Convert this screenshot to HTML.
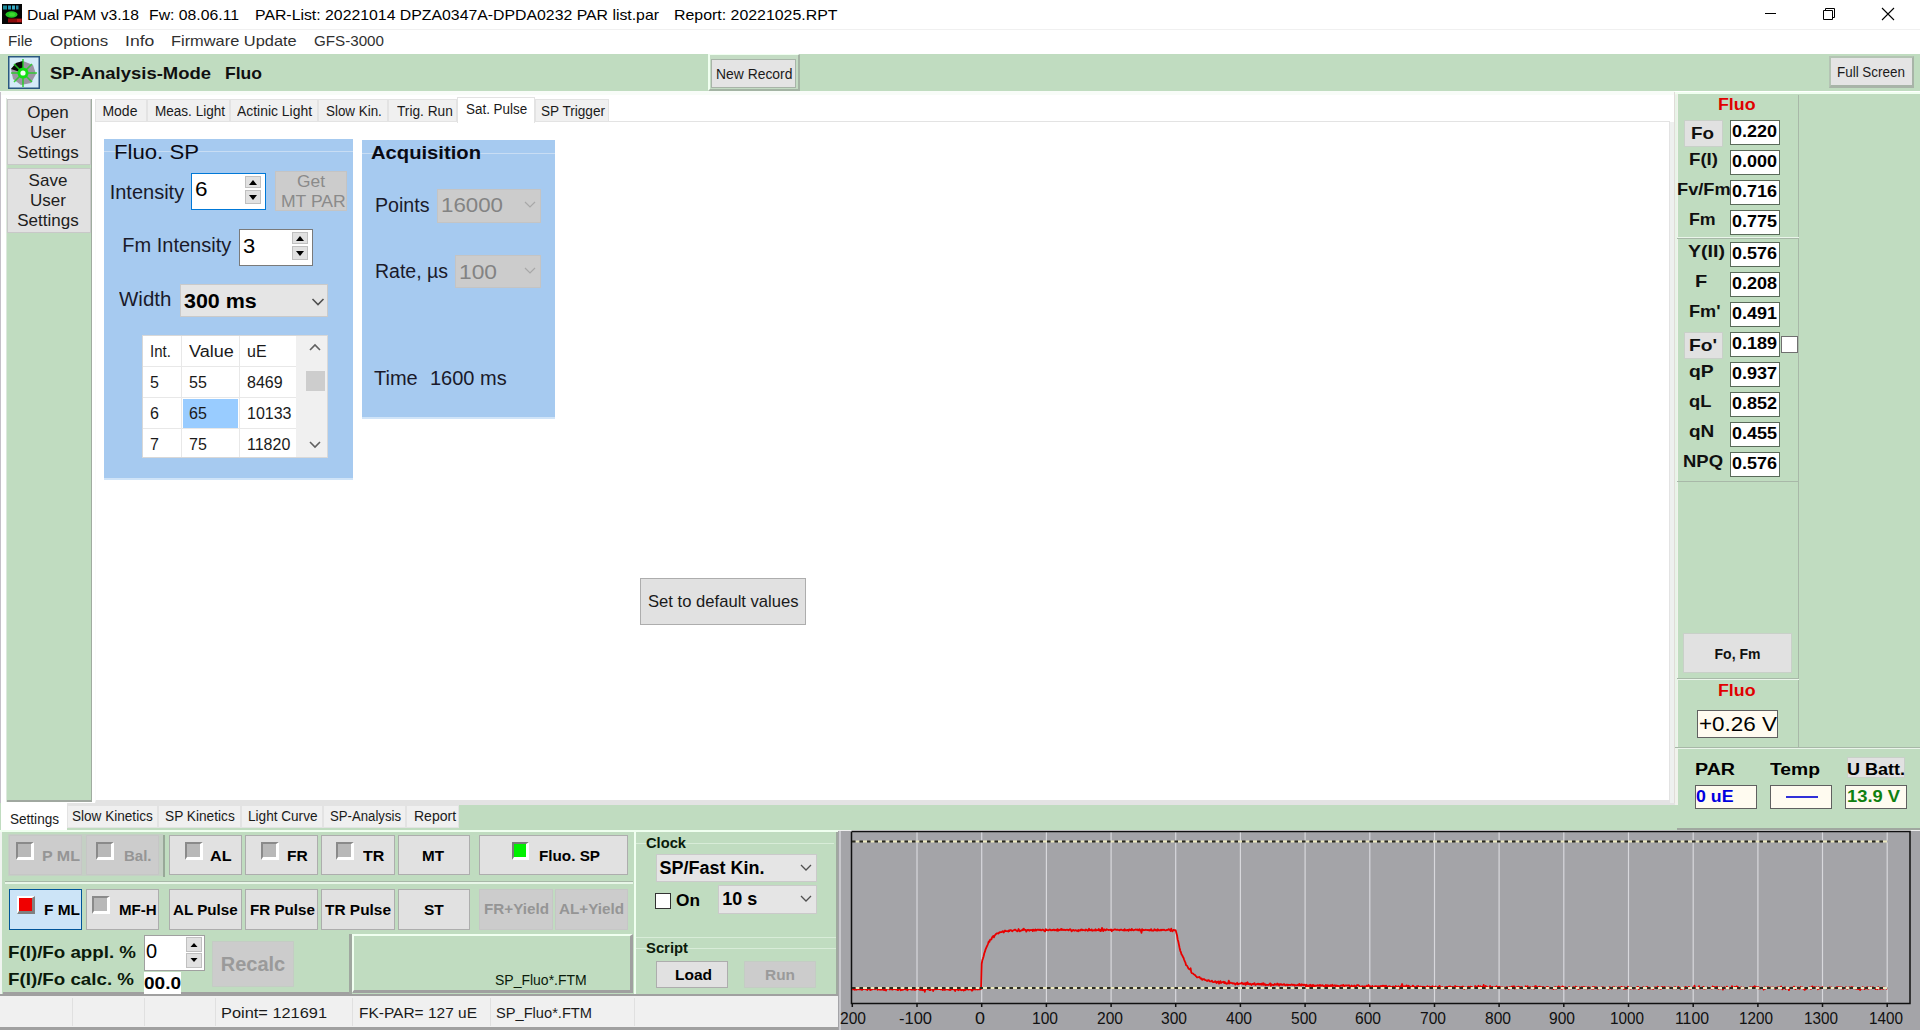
<!DOCTYPE html>
<html><head><meta charset="utf-8"><style>
html,body{margin:0;padding:0;width:1920px;height:1030px;overflow:hidden;background:#fff;}
body>div{position:absolute;}
.t{position:absolute;white-space:nowrap;line-height:0;font-family:"Liberation Sans", sans-serif;transform-origin:0 0;}
</style></head><body>
<div style="left:0px;top:0px;width:1920px;height:1030px;background:#ffffff;"></div>
<svg style="position:absolute;left:2px;top:4px" width="20" height="20" viewBox="0 0 20 20"><rect width="20" height="20" fill="#050505"/><rect x="1" y="1.5" width="4" height="4" fill="#1a8a9a"/><rect x="6" y="1.5" width="3" height="4" fill="#2a9aba"/><rect x="10" y="1.5" width="3" height="4" fill="#3ab0c8"/><rect x="14" y="1.5" width="2.5" height="4" fill="#2a8aa8"/><ellipse cx="9.5" cy="10.5" rx="6" ry="3.2" fill="#22c422"/><ellipse cx="10" cy="10.5" rx="3" ry="1.8" fill="#40d830"/><rect x="6" y="14.5" width="14" height="4" fill="#8a0a0a"/><rect x="15" y="15" width="4" height="3" fill="#b81818"/></svg>
<div class="t" style="left:26.50px;top:14.80px;font-size:15px;color:#000;transform:scaleX(1.0440);">Dual PAM v3.18</div>
<div class="t" style="left:148.50px;top:14.80px;font-size:15px;color:#000;transform:scaleX(1.0513);">Fw: 08.06.11</div>
<div class="t" style="left:254.50px;top:14.80px;font-size:15px;color:#000;transform:scaleX(1.0549);">PAR-List: 20221014 DPZA0347A-DPDA0232 PAR list.par</div>
<div class="t" style="left:673.50px;top:14.80px;font-size:15px;color:#000;transform:scaleX(1.0599);">Report: 20221025.RPT</div>
<div style="left:1765px;top:13px;width:11px;height:1px;background:#000;"></div>
<svg style="position:absolute;left:1822px;top:7px" width="14" height="14" viewBox="0 0 14 14"><path d="M1.5 3.5h9v9h-9z M3.5 3.5v-2h9v9h-2" fill="none" stroke="#000" stroke-width="1"/></svg>
<svg style="position:absolute;left:1881px;top:7px" width="14" height="14" viewBox="0 0 14 14"><path d="M1 1L13 13M13 1L1 13" stroke="#000" stroke-width="1.1"/></svg>
<div style="left:0px;top:29px;width:1920px;height:1px;background:#f0f0f0;"></div>
<div class="t" style="left:7.50px;top:40.80px;font-size:15px;color:#303030;transform:scaleX(1.0136);">File</div>
<div class="t" style="left:49.60px;top:40.80px;font-size:15px;color:#303030;transform:scaleX(1.1257);">Options</div>
<div class="t" style="left:124.80px;top:40.80px;font-size:15px;color:#303030;transform:scaleX(1.1705);">Info</div>
<div class="t" style="left:171.00px;top:40.80px;font-size:15px;color:#303030;transform:scaleX(1.0930);">Firmware Update</div>
<div class="t" style="left:313.50px;top:40.80px;font-size:15px;color:#303030;transform:scaleX(1.0115);">GFS-3000</div>
<div style="left:0px;top:54px;width:1920px;height:37px;background:#c0dcc0;"></div>
<svg style="position:absolute;left:8px;top:56px" width="32" height="33" viewBox="0 0 32 33"><rect x="0.75" y="0.75" width="30.5" height="31.5" fill="#d4ecf8" stroke="#2a5880" stroke-width="1.5"/><path d="M15 5L25 9L28 18L23 27L13 29L5 23L3 13L8 7Z" fill="#9c94a4"/><path d="M15 17L15 5L8 7L3 13Z" fill="#0a0a0a"/><path d="M15 3V31M3 17H29M6 8L24 26M24 8L6 26" stroke="#20d020" stroke-width="1.6" opacity="0.85"/><circle cx="15" cy="17" r="5.5" fill="#10e010"/><circle cx="15" cy="17" r="2.6" fill="#f4fff4"/></svg>
<div class="t" style="left:49.75px;top:73.61px;font-size:17px;font-weight:bold;color:#101010;transform:scaleX(1.0855);">SP-Analysis-Mode</div>
<div class="t" style="left:224.75px;top:73.61px;font-size:17px;font-weight:bold;color:#101010;transform:scaleX(1.0309);">Fluo</div>
<div style="left:708px;top:54px;width:92px;height:37px;background:#c4dcc4;border-top:1px solid #f0fff0;border-left:2px solid #f0fff0;border-bottom:2px solid #a4b4a4;border-right:2px solid #a4b4a4;box-sizing:border-box;"></div>
<div style="left:711px;top:59px;width:85px;height:29px;background:#e4e4e4;border:1px solid #a8b4a8;box-sizing:border-box;"></div>
<div class="t" style="left:716.00px;top:73.80px;font-size:15px;color:#1a1a1a;transform:scaleX(0.9257);">New Record</div>
<div style="left:1829px;top:56px;width:85px;height:32px;background:#e4e4e4;border-top:2px solid #b4c4b4;border-left:2px solid #b4c4b4;border-bottom:3px solid #a8b4a8;border-right:2px solid #a8b4a8;box-sizing:border-box;"></div>
<div class="t" style="left:1837.00px;top:72.40px;font-size:15px;color:#1a1a1a;transform:scaleX(0.8949);">Full Screen</div>
<div style="left:0px;top:91px;width:1675px;height:4px;background:#f8fcf8;"></div>
<div style="left:0px;top:92px;width:1px;height:740px;background:#c4c0c8;"></div>
<div style="left:7px;top:99px;width:85px;height:703px;background:#c0dcc0;border-right:1px solid #a0aca0;border-bottom:2px solid #a0a8a0;box-sizing:border-box;"></div>
<div style="left:6px;top:98px;width:1px;height:704px;background:#dce8dc;"></div>
<div style="left:7px;top:99px;width:84px;height:66px;background:#e1e1e1;border:1px solid #c8c8c8;box-sizing:border-box;"></div>
<div style="left:7px;top:168px;width:84px;height:65px;background:#e1e1e1;border:1px solid #c8c8c8;box-sizing:border-box;"></div>
<div class="t" style="left:27.20px;top:112.51px;font-size:17px;color:#202020;">Open</div>
<div class="t" style="left:30.05px;top:132.51px;font-size:17px;color:#202020;">User</div>
<div class="t" style="left:17.28px;top:152.51px;font-size:17px;color:#202020;">Settings</div>
<div class="t" style="left:28.62px;top:181.11px;font-size:17px;color:#202020;">Save</div>
<div class="t" style="left:30.05px;top:201.11px;font-size:17px;color:#202020;">User</div>
<div class="t" style="left:17.28px;top:221.11px;font-size:17px;color:#202020;">Settings</div>
<div style="left:95px;top:121px;width:1575px;height:682px;background:#fff;border:1px solid #e3e3e3;border-left-color:#fbfbfb;border-bottom:3px solid #e3e3e3;box-sizing:border-box;"></div>
<div style="left:1670px;top:122px;width:4px;height:683px;background:#eef0ef;"></div>
<div style="left:1674px;top:92px;width:1px;height:713px;background:#e0dcd8;"></div>
<div style="left:1675px;top:92px;width:3px;height:713px;background:#f0f2ec;"></div>
<div style="left:95px;top:99px;width:52px;height:23px;background:#f0f0f0;border:1px solid #e3e3e3;box-sizing:border-box;"></div>
<div class="t" style="left:102.40px;top:111.45px;font-size:14px;color:#1a1a1a;">Mode</div>
<div style="left:147px;top:99px;width:83px;height:23px;background:#f0f0f0;border:1px solid #e3e3e3;box-sizing:border-box;"></div>
<div class="t" style="left:154.50px;top:111.45px;font-size:14px;color:#1a1a1a;transform:scaleX(0.9672);">Meas. Light</div>
<div style="left:230px;top:99px;width:88px;height:23px;background:#f0f0f0;border:1px solid #e3e3e3;box-sizing:border-box;"></div>
<div class="t" style="left:237.30px;top:111.45px;font-size:14px;color:#1a1a1a;transform:scaleX(0.9936);">Actinic Light</div>
<div style="left:318px;top:99px;width:70px;height:23px;background:#f0f0f0;border:1px solid #e3e3e3;box-sizing:border-box;"></div>
<div class="t" style="left:325.50px;top:111.45px;font-size:14px;color:#1a1a1a;transform:scaleX(0.9561);">Slow Kin.</div>
<div style="left:388px;top:99px;width:69px;height:23px;background:#f0f0f0;border:1px solid #e3e3e3;box-sizing:border-box;"></div>
<div class="t" style="left:396.60px;top:111.45px;font-size:14px;color:#1a1a1a;transform:scaleX(0.9779);">Trig. Run</div>
<div style="left:457px;top:97px;width:78px;height:26px;background:#fff;border:1px solid #e3e3e3;border-bottom:none;box-sizing:border-box;"></div>
<div class="t" style="left:465.90px;top:108.95px;font-size:14px;color:#1a1a1a;transform:scaleX(0.9588);">Sat. Pulse</div>
<div style="left:535px;top:99px;width:74px;height:23px;background:#f0f0f0;border:1px solid #e3e3e3;box-sizing:border-box;"></div>
<div class="t" style="left:540.60px;top:111.45px;font-size:14px;color:#1a1a1a;transform:scaleX(0.9713);">SP Trigger</div>
<div style="left:104px;top:139px;width:249px;height:341px;background:#a6caf0;border-bottom:2px solid #d0e4f8;box-sizing:border-box;"></div>
<div style="left:104px;top:151px;width:249px;height:1px;background:#c8ddf4;"></div>
<div class="t" style="left:114.40px;top:151.57px;font-size:20px;color:#0a0a14;transform:scaleX(1.1082);">Fluo. SP</div>
<div class="t" style="left:109.70px;top:191.77px;font-size:20px;color:#1a1a2a;">Intensity</div>
<div style="left:191px;top:173px;width:75px;height:37px;background:#fff;border:1px solid #0078d7;box-sizing:border-box;"></div>
<div class="t" style="left:194.70px;top:189.07px;font-size:20px;color:#000;transform:scaleX(1.1236);">6</div>
<div style="left:245px;top:176px;width:16px;height:12px;background:#e1e1e1;border:1px solid #c0c0c0;box-sizing:border-box;"></div>
<div style="left:245px;top:190px;width:16px;height:14px;background:#e1e1e1;border:1px solid #c0c0c0;box-sizing:border-box;"></div>
<svg style="position:absolute;left:245px;top:176px" width="16" height="28"><path d="M4 9h8l-4-5z" fill="#000"/><path d="M4 19h8l-4 5z" fill="#000"/></svg>
<div style="left:275px;top:171px;width:72px;height:40px;background:#cccccc;border:1px solid #c4c4c4;box-sizing:border-box;"></div>
<div class="t" style="left:297.00px;top:181.66px;font-size:16px;color:#8a8a8a;transform:scaleX(1.0854);">Get</div>
<div class="t" style="left:280.80px;top:201.96px;font-size:16px;color:#8a8a8a;transform:scaleX(1.0972);">MT PAR</div>
<div class="t" style="left:122.30px;top:245.07px;font-size:20px;color:#1a1a2a;">Fm Intensity</div>
<div style="left:239px;top:229px;width:74px;height:37px;background:#fff;border:1px solid #7a7a7a;box-sizing:border-box;"></div>
<div class="t" style="left:242.60px;top:245.77px;font-size:20px;color:#000;transform:scaleX(1.0966);">3</div>
<div style="left:292px;top:232px;width:16px;height:12px;background:#e1e1e1;border:1px solid #c0c0c0;box-sizing:border-box;"></div>
<div style="left:292px;top:246px;width:16px;height:14px;background:#e1e1e1;border:1px solid #c0c0c0;box-sizing:border-box;"></div>
<svg style="position:absolute;left:292px;top:232px" width="16" height="28"><path d="M4 9h8l-4-5z" fill="#000"/><path d="M4 19h8l-4 5z" fill="#000"/></svg>
<div class="t" style="left:119.20px;top:299.17px;font-size:20px;color:#1a1a2a;transform:scaleX(1.0249);">Width</div>
<div style="left:180px;top:284px;width:148px;height:33px;background:#e5e5e5;border:1px solid #cacaca;box-sizing:border-box;"></div>
<div class="t" style="left:183.60px;top:300.57px;font-size:20px;font-weight:bold;color:#000;transform:scaleX(1.0731);">300 ms</div>
<svg style="position:absolute;left:311px;top:296px" width="14" height="12"><path d="M1.5 3l5.5 5.5 5.5-5.5" fill="none" stroke="#505050" stroke-width="1.6"/></svg>
<div style="left:142px;top:335px;width:186px;height:123px;background:#fff;border:1px solid #d8d8d8;box-sizing:border-box;"></div>
<div style="left:296px;top:336px;width:31px;height:121px;background:#f0f0f0;"></div>
<div style="left:306px;top:371px;width:19px;height:20px;background:#cdcdcd;"></div>
<svg style="position:absolute;left:305px;top:340px" width="20" height="118"><path d="M5 10l5-5 5 5" fill="none" stroke="#606060" stroke-width="1.6"/><path d="M5 102l5 5 5-5" fill="none" stroke="#606060" stroke-width="1.6"/></svg>
<div style="left:181px;top:336px;width:1px;height:121px;background:#e8e8e8;"></div>
<div style="left:239px;top:336px;width:1px;height:121px;background:#e8e8e8;"></div>
<div style="left:143px;top:366px;width:153px;height:1px;background:#e8e8e8;"></div>
<div style="left:143px;top:397px;width:153px;height:1px;background:#e8e8e8;"></div>
<div style="left:143px;top:428px;width:153px;height:1px;background:#e8e8e8;"></div>
<div style="left:183px;top:399px;width:55px;height:29px;background:#99ccff;"></div>
<div class="t" style="left:150.20px;top:352.26px;font-size:16px;color:#1a1a1a;transform:scaleX(0.9355);">Int.</div>
<div class="t" style="left:189.00px;top:352.26px;font-size:16px;color:#1a1a1a;transform:scaleX(1.1300);">Value</div>
<div class="t" style="left:247.00px;top:351.96px;font-size:16px;color:#1a1a1a;">uE</div>
<div class="t" style="left:150.00px;top:382.96px;font-size:16px;color:#1a1a1a;">5</div>
<div class="t" style="left:189.00px;top:382.96px;font-size:16px;color:#1a1a1a;">55</div>
<div class="t" style="left:247.00px;top:382.96px;font-size:16px;color:#1a1a1a;">8469</div>
<div class="t" style="left:150.00px;top:413.96px;font-size:16px;color:#1a1a1a;">6</div>
<div class="t" style="left:189.00px;top:413.96px;font-size:16px;color:#1a1a1a;">65</div>
<div class="t" style="left:247.00px;top:413.96px;font-size:16px;color:#1a1a1a;">10133</div>
<div class="t" style="left:150.00px;top:444.96px;font-size:16px;color:#1a1a1a;">7</div>
<div class="t" style="left:189.00px;top:444.96px;font-size:16px;color:#1a1a1a;">75</div>
<div class="t" style="left:247.00px;top:444.96px;font-size:16px;color:#1a1a1a;">11820</div>
<div style="left:362px;top:140px;width:193px;height:279px;background:#a6caf0;border-bottom:2px solid #d0e4f8;box-sizing:border-box;"></div>
<div style="left:362px;top:153px;width:193px;height:1px;background:#c8ddf4;"></div>
<div class="t" style="left:370.80px;top:153.42px;font-size:19px;font-weight:bold;color:#0a0a14;transform:scaleX(1.0633);">Acquisition</div>
<div class="t" style="left:374.60px;top:204.57px;font-size:20px;color:#1a1a2a;transform:scaleX(0.9803);">Points</div>
<div style="left:437px;top:189px;width:104px;height:34px;background:#cccccc;border:1px solid #c4c4c4;box-sizing:border-box;"></div>
<div class="t" style="left:441.00px;top:205.07px;font-size:20px;color:#838383;transform:scaleX(1.1146);">16000</div>
<svg style="position:absolute;left:523px;top:199px" width="14" height="12"><path d="M2 3l5 5 5-5" fill="none" stroke="#a8a8a8" stroke-width="1.2"/></svg>
<div class="t" style="left:374.60px;top:271.07px;font-size:20px;color:#1a1a2a;transform:scaleX(0.9748);">Rate, µs</div>
<div style="left:455px;top:255px;width:86px;height:33px;background:#cccccc;border:1px solid #c4c4c4;box-sizing:border-box;"></div>
<div class="t" style="left:459.00px;top:272.07px;font-size:20px;color:#838383;transform:scaleX(1.1386);">100</div>
<svg style="position:absolute;left:523px;top:265px" width="14" height="12"><path d="M2 3l5 5 5-5" fill="none" stroke="#a8a8a8" stroke-width="1.2"/></svg>
<div class="t" style="left:374.00px;top:378.07px;font-size:20px;color:#1a1a2a;">Time</div>
<div class="t" style="left:430.00px;top:378.07px;font-size:20px;color:#1a1a2a;">1600 ms</div>
<div style="left:640px;top:578px;width:166px;height:47px;background:#e1e1e1;border:1px solid #adadad;box-sizing:border-box;"></div>
<div class="t" style="left:648.40px;top:601.81px;font-size:17px;color:#1a1a1a;transform:scaleX(0.9776);">Set to default values</div>
<div style="left:1678px;top:92px;width:242px;height:740px;background:#c0dcc0;"></div>
<div style="left:1675px;top:805px;width:3px;height:27px;background:#c0dcc0;"></div>
<div style="left:1675px;top:92px;width:245px;height:2px;background:#f0fff0;"></div>
<div style="left:1675px;top:95px;width:124px;height:653px;border-left:2px solid #e8f4e8;border-right:1px solid #a8b8a8;box-sizing:border-box;"></div>
<div class="t" style="left:1718.45px;top:104.96px;font-size:16px;font-weight:bold;color:#e00000;transform:scaleX(1.1106);">Fluo</div>
<div style="left:1677px;top:237px;width:122px;height:1px;background:#eaf5ea;"></div>
<div style="left:1677px;top:238px;width:122px;height:1px;background:#a8b8a8;"></div>
<div style="left:1684px;top:120px;width:39px;height:27px;background:#e1e1e1;border:1px solid #c8d0c8;box-sizing:border-box;"></div>
<div class="t" style="left:1691.00px;top:133.61px;font-size:17px;font-weight:bold;color:#101010;transform:scaleX(1.1068);">Fo</div>
<div style="left:1730px;top:120px;width:50px;height:25px;background:#fff;border:1px solid #5a6a5a;box-sizing:border-box;"></div>
<div class="t" style="left:1731.50px;top:132.11px;font-size:17px;font-weight:bold;color:#000;transform:scaleX(1.0577);">0.220</div>
<div class="t" style="left:1688.50px;top:160.41px;font-size:17px;font-weight:bold;color:#101010;transform:scaleX(1.0969);">F(I)</div>
<div style="left:1730px;top:150px;width:50px;height:25px;background:#fff;border:1px solid #5a6a5a;box-sizing:border-box;"></div>
<div class="t" style="left:1731.50px;top:162.11px;font-size:17px;font-weight:bold;color:#000;transform:scaleX(1.0577);">0.000</div>
<div class="t" style="left:1677.05px;top:190.41px;font-size:17px;font-weight:bold;color:#101010;transform:scaleX(1.0727);">Fv/Fm</div>
<div style="left:1730px;top:180px;width:50px;height:25px;background:#fff;border:1px solid #5a6a5a;box-sizing:border-box;"></div>
<div class="t" style="left:1731.50px;top:192.11px;font-size:17px;font-weight:bold;color:#000;transform:scaleX(1.0577);">0.716</div>
<div class="t" style="left:1688.55px;top:220.41px;font-size:17px;font-weight:bold;color:#101010;transform:scaleX(1.0471);">Fm</div>
<div style="left:1730px;top:210px;width:50px;height:25px;background:#fff;border:1px solid #5a6a5a;box-sizing:border-box;"></div>
<div class="t" style="left:1731.50px;top:222.11px;font-size:17px;font-weight:bold;color:#000;transform:scaleX(1.0577);">0.775</div>
<div class="t" style="left:1687.70px;top:252.41px;font-size:17px;font-weight:bold;color:#101010;transform:scaleX(1.1523);">Y(II)</div>
<div style="left:1730px;top:242px;width:50px;height:25px;background:#fff;border:1px solid #5a6a5a;box-sizing:border-box;"></div>
<div class="t" style="left:1731.50px;top:254.11px;font-size:17px;font-weight:bold;color:#000;transform:scaleX(1.0577);">0.576</div>
<div class="t" style="left:1695.00px;top:282.41px;font-size:17px;font-weight:bold;color:#101010;transform:scaleX(1.1741);">F</div>
<div style="left:1730px;top:272px;width:50px;height:25px;background:#fff;border:1px solid #5a6a5a;box-sizing:border-box;"></div>
<div class="t" style="left:1731.50px;top:284.11px;font-size:17px;font-weight:bold;color:#000;transform:scaleX(1.0577);">0.208</div>
<div class="t" style="left:1688.50px;top:312.41px;font-size:17px;font-weight:bold;color:#101010;transform:scaleX(1.0661);">Fm'</div>
<div style="left:1730px;top:302px;width:50px;height:25px;background:#fff;border:1px solid #5a6a5a;box-sizing:border-box;"></div>
<div class="t" style="left:1731.50px;top:314.11px;font-size:17px;font-weight:bold;color:#000;transform:scaleX(1.0577);">0.491</div>
<div style="left:1684px;top:332px;width:39px;height:27px;background:#e1e1e1;border:1px solid #c8d0c8;box-sizing:border-box;"></div>
<div class="t" style="left:1689.00px;top:345.61px;font-size:17px;font-weight:bold;color:#101010;transform:scaleX(1.1285);">Fo'</div>
<div style="left:1730px;top:332px;width:50px;height:25px;background:#fff;border:1px solid #5a6a5a;box-sizing:border-box;"></div>
<div class="t" style="left:1731.50px;top:344.11px;font-size:17px;font-weight:bold;color:#000;transform:scaleX(1.0577);">0.189</div>
<div class="t" style="left:1688.65px;top:372.41px;font-size:17px;font-weight:bold;color:#101010;transform:scaleX(1.1364);">qP</div>
<div style="left:1730px;top:362px;width:50px;height:25px;background:#fff;border:1px solid #5a6a5a;box-sizing:border-box;"></div>
<div class="t" style="left:1731.50px;top:374.11px;font-size:17px;font-weight:bold;color:#000;transform:scaleX(1.0577);">0.937</div>
<div class="t" style="left:1688.80px;top:402.41px;font-size:17px;font-weight:bold;color:#101010;transform:scaleX(1.0779);">qL</div>
<div style="left:1730px;top:392px;width:50px;height:25px;background:#fff;border:1px solid #5a6a5a;box-sizing:border-box;"></div>
<div class="t" style="left:1731.50px;top:404.11px;font-size:17px;font-weight:bold;color:#000;transform:scaleX(1.0577);">0.852</div>
<div class="t" style="left:1688.65px;top:432.41px;font-size:17px;font-weight:bold;color:#101010;transform:scaleX(1.1159);">qN</div>
<div style="left:1730px;top:422px;width:50px;height:25px;background:#fff;border:1px solid #5a6a5a;box-sizing:border-box;"></div>
<div class="t" style="left:1731.50px;top:434.11px;font-size:17px;font-weight:bold;color:#000;transform:scaleX(1.0577);">0.455</div>
<div class="t" style="left:1682.70px;top:462.41px;font-size:17px;font-weight:bold;color:#101010;transform:scaleX(1.0857);">NPQ</div>
<div style="left:1730px;top:452px;width:50px;height:25px;background:#fff;border:1px solid #5a6a5a;box-sizing:border-box;"></div>
<div class="t" style="left:1731.50px;top:464.11px;font-size:17px;font-weight:bold;color:#000;transform:scaleX(1.0577);">0.576</div>
<div style="left:1781px;top:336px;width:17px;height:17px;background:#fff;border:1px solid #707070;box-sizing:border-box;"></div>
<div style="left:1677px;top:481px;width:122px;height:1px;background:#a8b8a8;"></div>
<div style="left:1683px;top:633px;width:109px;height:40px;background:#e1e1e1;border:1px solid #c8d0c8;box-sizing:border-box;"></div>
<div class="t" style="left:1714.55px;top:654.15px;font-size:14px;font-weight:bold;color:#101010;">Fo, Fm</div>
<div style="left:1677px;top:678px;width:122px;height:1px;background:#a8b8a8;"></div>
<div style="left:1677px;top:679px;width:122px;height:1px;background:#eaf5ea;"></div>
<div class="t" style="left:1718.45px;top:690.96px;font-size:16px;font-weight:bold;color:#e00000;transform:scaleX(1.1106);">Fluo</div>
<div style="left:1697px;top:710px;width:81px;height:28px;background:#fffbf0;border:1px solid #606060;box-sizing:border-box;"></div>
<div class="t" style="left:1699.00px;top:724.07px;font-size:20px;color:#000;transform:scaleX(1.1220);">+0.26 V</div>
<div style="left:1675px;top:747px;width:245px;height:1px;background:#a8b8a8;"></div>
<div style="left:1675px;top:748px;width:245px;height:1px;background:#eaf5ea;"></div>
<div class="t" style="left:1695.00px;top:770.46px;font-size:16px;font-weight:bold;color:#000;transform:scaleX(1.2272);">PAR</div>
<div class="t" style="left:1769.60px;top:770.46px;font-size:16px;font-weight:bold;color:#000;transform:scaleX(1.2053);">Temp</div>
<div style="left:1847px;top:757px;width:58px;height:21px;background:#e1e1e1;border:1px solid #c8d0c8;box-sizing:border-box;"></div>
<div class="t" style="left:1847.00px;top:769.96px;font-size:16px;font-weight:bold;color:#000;transform:scaleX(1.1248);">U Batt.</div>
<div style="left:1695px;top:785px;width:62px;height:24px;background:#fffbf0;border:1px solid #606060;box-sizing:border-box;"></div>
<div class="t" style="left:1696.00px;top:797.11px;font-size:17px;font-weight:bold;color:#0000e0;transform:scaleX(1.0444);">0 uE</div>
<div style="left:1770px;top:785px;width:62px;height:24px;background:#fffbf0;border:1px solid #606060;box-sizing:border-box;"></div>
<div style="left:1786px;top:796px;width:32px;height:2px;background:#3030d8;"></div>
<div style="left:1845px;top:785px;width:62px;height:24px;background:#fffbf0;border:1px solid #606060;box-sizing:border-box;"></div>
<div class="t" style="left:1846.50px;top:797.11px;font-size:17px;font-weight:bold;color:#108010;transform:scaleX(1.0782);">13.9 V</div>
<div style="left:1677px;top:828px;width:243px;height:2px;background:#a0a8a0;"></div>
<div style="left:0px;top:803px;width:1675px;height:27px;background:#c0dcc0;"></div>
<div style="left:1px;top:803px;width:1674px;height:2px;background:#e3e3e3;"></div>
<div style="left:1px;top:803px;width:66px;height:28px;background:#fff;"></div>
<div class="t" style="left:9.50px;top:818.95px;font-size:14px;color:#1a1a1a;transform:scaleX(0.9685);">Settings</div>
<div style="left:67px;top:805px;width:90.5px;height:23px;background:#f0f0f0;border:1px solid #e3e3e3;box-sizing:border-box;"></div>
<div class="t" style="left:71.50px;top:816.45px;font-size:14px;color:#1a1a1a;transform:scaleX(0.9698);">Slow Kinetics</div>
<div style="left:157.5px;top:805px;width:83.0px;height:23px;background:#f0f0f0;border:1px solid #e3e3e3;box-sizing:border-box;"></div>
<div class="t" style="left:165.00px;top:816.45px;font-size:14px;color:#1a1a1a;transform:scaleX(0.9777);">SP Kinetics</div>
<div style="left:240.5px;top:805px;width:82.0px;height:23px;background:#f0f0f0;border:1px solid #e3e3e3;box-sizing:border-box;"></div>
<div class="t" style="left:247.75px;top:816.45px;font-size:14px;color:#1a1a1a;transform:scaleX(0.9708);">Light Curve</div>
<div style="left:322.5px;top:805px;width:83.5px;height:23px;background:#f0f0f0;border:1px solid #e3e3e3;box-sizing:border-box;"></div>
<div class="t" style="left:330.00px;top:816.45px;font-size:14px;color:#1a1a1a;transform:scaleX(0.9408);">SP-Analysis</div>
<div style="left:406px;top:805px;width:53px;height:23px;background:#f0f0f0;border:1px solid #e3e3e3;box-sizing:border-box;"></div>
<div class="t" style="left:414.00px;top:816.45px;font-size:14px;color:#1a1a1a;">Report</div>
<div style="left:0px;top:830px;width:838px;height:166px;background:#c0dcc0;"></div>
<div style="left:0px;top:830px;width:838px;height:2px;background:#f0fff0;"></div>
<div style="left:0px;top:832px;width:2px;height:162px;background:#f0f4f0;"></div>
<div style="left:8px;top:834px;width:155px;height:42px;background:#c4d0c4;"></div>
<div style="left:9px;top:835px;width:73px;height:40px;background:#cccccc;border:1px solid #c6c6c6;box-sizing:border-box;"></div>
<div style="left:16px;top:842px;width:18px;height:18px;background:#b8b8b8;border-top:2px solid #8a8a8a;border-left:2px solid #8a8a8a;border-bottom:3px solid #fff;border-right:3px solid #fff;box-sizing:border-box;"></div>
<div class="t" style="left:42.30px;top:855.80px;font-size:15px;font-weight:bold;color:#959595;transform:scaleX(1.0685);">P ML</div>
<div style="left:86px;top:835px;width:73px;height:40px;background:#cccccc;border:1px solid #c6c6c6;box-sizing:border-box;"></div>
<div style="left:96px;top:842px;width:18px;height:18px;background:#b8b8b8;border-top:2px solid #8a8a8a;border-left:2px solid #8a8a8a;border-bottom:3px solid #fff;border-right:3px solid #fff;box-sizing:border-box;"></div>
<div class="t" style="left:124.00px;top:855.80px;font-size:15px;font-weight:bold;color:#959595;">Bal.</div>
<div style="left:163px;top:835px;width:2px;height:42px;background:#98a898;"></div>
<div style="left:169px;top:835px;width:73px;height:40px;background:#e1e1e1;border:1px solid #adadad;box-sizing:border-box;"></div>
<div style="left:185px;top:842px;width:18px;height:18px;background:#b8b8b8;border-top:2px solid #8a8a8a;border-left:2px solid #8a8a8a;border-bottom:3px solid #fff;border-right:3px solid #fff;box-sizing:border-box;"></div>
<div class="t" style="left:209.80px;top:855.80px;font-size:15px;font-weight:bold;color:#000;transform:scaleX(1.0750);">AL</div>
<div style="left:245px;top:835px;width:73px;height:40px;background:#e1e1e1;border:1px solid #adadad;box-sizing:border-box;"></div>
<div style="left:261px;top:842px;width:18px;height:18px;background:#b8b8b8;border-top:2px solid #8a8a8a;border-left:2px solid #8a8a8a;border-bottom:3px solid #fff;border-right:3px solid #fff;box-sizing:border-box;"></div>
<div class="t" style="left:287.00px;top:855.80px;font-size:15px;font-weight:bold;color:#000;transform:scaleX(1.0350);">FR</div>
<div style="left:321px;top:835px;width:74px;height:40px;background:#e1e1e1;border:1px solid #adadad;box-sizing:border-box;"></div>
<div style="left:336px;top:842px;width:18px;height:18px;background:#b8b8b8;border-top:2px solid #8a8a8a;border-left:2px solid #8a8a8a;border-bottom:3px solid #fff;border-right:3px solid #fff;box-sizing:border-box;"></div>
<div class="t" style="left:362.70px;top:855.80px;font-size:15px;font-weight:bold;color:#000;transform:scaleX(1.0650);">TR</div>
<div style="left:398px;top:835px;width:72px;height:40px;background:#e1e1e1;border:1px solid #adadad;box-sizing:border-box;"></div>
<div class="t" style="left:422.30px;top:855.80px;font-size:15px;font-weight:bold;color:#000;transform:scaleX(1.0151);">MT</div>
<div style="left:479px;top:835px;width:149px;height:40px;background:#e1e1e1;border:1px solid #adadad;box-sizing:border-box;"></div>
<div style="left:512px;top:842px;width:17px;height:18px;background:#00f000;border-top:2px solid #7a7a7a;border-left:2px solid #7a7a7a;border-bottom:3px solid #fff;border-right:3px solid #fff;box-sizing:border-box;"></div>
<div class="t" style="left:538.50px;top:855.80px;font-size:15px;font-weight:bold;color:#000;transform:scaleX(1.0167);">Fluo. SP</div>
<div style="left:5px;top:881px;width:628px;height:1px;background:#a8b8a8;"></div>
<div style="left:5px;top:882px;width:628px;height:2px;background:#e8f6e8;"></div>
<div style="left:9px;top:889px;width:73px;height:41px;background:#cce4f7;border:1px solid #005499;box-sizing:border-box;"></div>
<div style="left:17px;top:896px;width:18px;height:18px;background:#f00000;border-top:2px solid #fff;border-left:2px solid #fff;border-bottom:3px solid #808080;border-right:3px solid #808080;box-sizing:border-box;"></div>
<div class="t" style="left:43.90px;top:909.80px;font-size:15px;font-weight:bold;color:#000;transform:scaleX(1.0286);">F ML</div>
<div style="left:86px;top:889px;width:73px;height:41px;background:#e1e1e1;border:1px solid #adadad;box-sizing:border-box;"></div>
<div style="left:92px;top:896px;width:18px;height:18px;background:#b8b8b8;border-top:2px solid #8a8a8a;border-left:2px solid #8a8a8a;border-bottom:3px solid #fff;border-right:3px solid #fff;box-sizing:border-box;"></div>
<div class="t" style="left:118.80px;top:909.80px;font-size:15px;font-weight:bold;color:#000;transform:scaleX(1.0053);">MF-H</div>
<div style="left:169px;top:889px;width:73px;height:41px;background:#e1e1e1;border:1px solid #adadad;box-sizing:border-box;"></div>
<div class="t" style="left:172.70px;top:909.80px;font-size:15px;font-weight:bold;color:#000;transform:scaleX(1.0106);">AL Pulse</div>
<div style="left:245px;top:889px;width:73px;height:41px;background:#e1e1e1;border:1px solid #adadad;box-sizing:border-box;"></div>
<div class="t" style="left:249.80px;top:909.80px;font-size:15px;font-weight:bold;color:#000;transform:scaleX(1.0111);">FR Pulse</div>
<div style="left:321px;top:889px;width:74px;height:41px;background:#e1e1e1;border:1px solid #adadad;box-sizing:border-box;"></div>
<div class="t" style="left:325.30px;top:909.80px;font-size:15px;font-weight:bold;color:#000;transform:scaleX(1.0282);">TR Pulse</div>
<div style="left:398px;top:889px;width:72px;height:41px;background:#e1e1e1;border:1px solid #adadad;box-sizing:border-box;"></div>
<div class="t" style="left:423.70px;top:909.80px;font-size:15px;font-weight:bold;color:#000;transform:scaleX(1.0328);">ST</div>
<div style="left:479px;top:889px;width:74px;height:41px;background:#cccccc;border:1px solid #c6c6c6;box-sizing:border-box;"></div>
<div class="t" style="left:483.80px;top:909.30px;font-size:15px;font-weight:bold;color:#959595;transform:scaleX(1.0149);">FR+Yield</div>
<div style="left:555px;top:889px;width:73px;height:41px;background:#cccccc;border:1px solid #c6c6c6;box-sizing:border-box;"></div>
<div class="t" style="left:558.90px;top:909.30px;font-size:15px;font-weight:bold;color:#959595;transform:scaleX(1.0149);">AL+Yield</div>
<div style="left:3px;top:934px;width:346px;height:60px;border-bottom:2px solid #a0a0a0;box-sizing:border-box;"></div>
<div class="t" style="left:8.00px;top:952.91px;font-size:17px;font-weight:bold;color:#0a1a0a;transform:scaleX(1.1020);">F(I)/Fo appl. %</div>
<div class="t" style="left:8.00px;top:980.11px;font-size:17px;font-weight:bold;color:#0a1a0a;transform:scaleX(1.1024);">F(I)/Fo calc. %</div>
<div style="left:144px;top:935px;width:61px;height:36px;background:#fff;border:1px solid #a0a0a0;box-sizing:border-box;"></div>
<div class="t" style="left:146.00px;top:951.07px;font-size:20px;color:#000;">0</div>
<div style="left:186px;top:937px;width:16px;height:15px;background:#e1e1e1;border:1px solid #c0c0c0;box-sizing:border-box;"></div>
<div style="left:186px;top:953px;width:16px;height:15px;background:#e1e1e1;border:1px solid #c0c0c0;box-sizing:border-box;"></div>
<svg style="position:absolute;left:186px;top:937px" width="16" height="31"><path d="M4.5 10h7l-3.5-4z" fill="#000"/><path d="M4.5 21h7l-3.5 4z" fill="#000"/></svg>
<div style="left:144px;top:972px;width:37px;height:22px;background:#fff;"></div>
<div class="t" style="left:144.00px;top:984.46px;font-size:16px;font-weight:bold;color:#000;transform:scaleX(1.1882);">00.0</div>
<div style="left:212px;top:941px;width:82px;height:46px;background:#cccccc;border:1px solid #c4ccc4;box-sizing:border-box;"></div>
<div class="t" style="left:220.75px;top:964.07px;font-size:20px;font-weight:bold;color:#9a9a9a;">Recalc</div>
<div style="left:349px;top:934px;width:3px;height:60px;background:#a0a8a0;"></div>
<div style="left:352px;top:934px;width:281px;height:59px;border-top:2px solid #f0fff0;border-left:2px solid #f0fff0;border-bottom:3px solid #a0a0a0;border-right:3px solid #a0a0a0;box-sizing:border-box;"></div>
<div class="t" style="left:495.40px;top:979.80px;font-size:15px;color:#0a1a0a;transform:scaleX(0.9323);">SP_Fluo*.FTM</div>
<div style="left:634px;top:832px;width:2px;height:163px;background:#f0fff0;"></div>
<div style="left:836px;top:832px;width:2px;height:163px;background:#a0a8a0;"></div>
<div style="left:636px;top:843px;width:198px;height:1px;background:#d8ecd8;"></div>
<div class="t" style="left:646.40px;top:842.65px;font-size:14px;font-weight:bold;color:#0a1a0a;transform:scaleX(1.0492);">Clock</div>
<div style="left:655.5px;top:853.5px;width:161px;height:28px;background:#e5e5e5;border:1px solid #cacaca;box-sizing:border-box;"></div>
<div class="t" style="left:659.50px;top:867.76px;font-size:18px;font-weight:bold;color:#000;">SP/Fast Kin.</div>
<svg style="position:absolute;left:799px;top:862px" width="14" height="12"><path d="M2 3l5 5 5-5" fill="none" stroke="#505050" stroke-width="1.3"/></svg>
<div style="left:655px;top:893px;width:16px;height:16px;background:#fff;border:1px solid #333;box-sizing:border-box;"></div>
<div class="t" style="left:676.40px;top:900.61px;font-size:17px;font-weight:bold;color:#000;transform:scaleX(1.0165);">On</div>
<div style="left:718px;top:884.5px;width:99px;height:29px;background:#e5e5e5;border:1px solid #cacaca;box-sizing:border-box;"></div>
<div class="t" style="left:722.30px;top:898.76px;font-size:18px;font-weight:bold;color:#000;">10 s</div>
<svg style="position:absolute;left:799px;top:893px" width="14" height="12"><path d="M2 3l5 5 5-5" fill="none" stroke="#505050" stroke-width="1.3"/></svg>
<div style="left:636px;top:937px;width:200px;height:1px;background:#d8ecd8;"></div>
<div style="left:636px;top:948px;width:200px;height:1px;background:#d8ecd8;"></div>
<div class="t" style="left:646.40px;top:948.15px;font-size:14px;font-weight:bold;color:#0a1a0a;transform:scaleX(1.0583);">Script</div>
<div style="left:656px;top:961px;width:72px;height:27px;background:#e1e1e1;border:1px solid #adadad;box-sizing:border-box;"></div>
<div class="t" style="left:674.80px;top:975.30px;font-size:15px;font-weight:bold;color:#000;transform:scaleX(1.0323);">Load</div>
<div style="left:744px;top:961px;width:72px;height:27px;background:#cccccc;border:1px solid #c4ccc4;box-sizing:border-box;"></div>
<div class="t" style="left:765.00px;top:975.30px;font-size:15px;font-weight:bold;color:#9a9a9a;transform:scaleX(1.0284);">Run</div>
<div style="left:0px;top:994px;width:838px;height:2px;background:#a0a0a0;"></div>
<div style="left:0px;top:996px;width:838px;height:34px;background:#f0f0f0;"></div>
<div style="left:72px;top:998px;width:1px;height:28px;background:#e0e0e0;"></div>
<div style="left:144px;top:998px;width:1px;height:28px;background:#e0e0e0;"></div>
<div style="left:215px;top:998px;width:1px;height:28px;background:#e0e0e0;"></div>
<div style="left:352px;top:998px;width:1px;height:28px;background:#e0e0e0;"></div>
<div style="left:490px;top:998px;width:1px;height:28px;background:#e0e0e0;"></div>
<div style="left:634px;top:998px;width:1px;height:28px;background:#e0e0e0;"></div>
<div style="left:0px;top:1027px;width:838px;height:3px;background:#a0a0a0;"></div>
<div class="t" style="left:220.50px;top:1013.30px;font-size:15px;color:#1a1a1a;transform:scaleX(1.0909);">Point= 121691</div>
<div class="t" style="left:358.70px;top:1013.30px;font-size:15px;color:#1a1a1a;transform:scaleX(1.0317);">FK-PAR= 127 uE</div>
<div class="t" style="left:495.70px;top:1013.30px;font-size:15px;color:#1a1a1a;transform:scaleX(0.9760);">SP_Fluo*.FTM</div>
<div style="left:838px;top:830px;width:1082px;height:200px;background:#a4a4a8;"></div>
<div style="left:838px;top:830px;width:1082px;height:1px;background:#f0f0f0;"></div>
<div style="left:839px;top:831px;width:2px;height:199px;background:#c8c8cc;"></div>
<svg style="position:absolute;left:0;top:0" width="1920" height="1030"><line x1="917.0" y1="832" x2="917.0" y2="1002" stroke="#d8d8dc" stroke-width="1.2"/><line x1="981.7" y1="832" x2="981.7" y2="1002" stroke="#d8d8dc" stroke-width="1.2"/><line x1="1046.4" y1="832" x2="1046.4" y2="1002" stroke="#d8d8dc" stroke-width="1.2"/><line x1="1111.1" y1="832" x2="1111.1" y2="1002" stroke="#d8d8dc" stroke-width="1.2"/><line x1="1175.7" y1="832" x2="1175.7" y2="1002" stroke="#d8d8dc" stroke-width="1.2"/><line x1="1240.4" y1="832" x2="1240.4" y2="1002" stroke="#d8d8dc" stroke-width="1.2"/><line x1="1305.1" y1="832" x2="1305.1" y2="1002" stroke="#d8d8dc" stroke-width="1.2"/><line x1="1369.8" y1="832" x2="1369.8" y2="1002" stroke="#d8d8dc" stroke-width="1.2"/><line x1="1434.5" y1="832" x2="1434.5" y2="1002" stroke="#d8d8dc" stroke-width="1.2"/><line x1="1499.1" y1="832" x2="1499.1" y2="1002" stroke="#d8d8dc" stroke-width="1.2"/><line x1="1563.8" y1="832" x2="1563.8" y2="1002" stroke="#d8d8dc" stroke-width="1.2"/><line x1="1628.5" y1="832" x2="1628.5" y2="1002" stroke="#d8d8dc" stroke-width="1.2"/><line x1="1693.2" y1="832" x2="1693.2" y2="1002" stroke="#d8d8dc" stroke-width="1.2"/><line x1="1757.9" y1="832" x2="1757.9" y2="1002" stroke="#d8d8dc" stroke-width="1.2"/><line x1="1822.5" y1="832" x2="1822.5" y2="1002" stroke="#d8d8dc" stroke-width="1.2"/><line x1="1887.2" y1="832" x2="1887.2" y2="1002" stroke="#d8d8dc" stroke-width="1.2"/><path d="M851.5 832 V1003.5 H1910 V831.5 H851.5" fill="none" stroke="#101010" stroke-width="1.5"/><line x1="852.3" y1="1003" x2="852.3" y2="1007" stroke="#101010" stroke-width="1.5"/><line x1="917.0" y1="1003" x2="917.0" y2="1007" stroke="#101010" stroke-width="1.5"/><line x1="981.7" y1="1003" x2="981.7" y2="1007" stroke="#101010" stroke-width="1.5"/><line x1="1046.4" y1="1003" x2="1046.4" y2="1007" stroke="#101010" stroke-width="1.5"/><line x1="1111.1" y1="1003" x2="1111.1" y2="1007" stroke="#101010" stroke-width="1.5"/><line x1="1175.7" y1="1003" x2="1175.7" y2="1007" stroke="#101010" stroke-width="1.5"/><line x1="1240.4" y1="1003" x2="1240.4" y2="1007" stroke="#101010" stroke-width="1.5"/><line x1="1305.1" y1="1003" x2="1305.1" y2="1007" stroke="#101010" stroke-width="1.5"/><line x1="1369.8" y1="1003" x2="1369.8" y2="1007" stroke="#101010" stroke-width="1.5"/><line x1="1434.5" y1="1003" x2="1434.5" y2="1007" stroke="#101010" stroke-width="1.5"/><line x1="1499.1" y1="1003" x2="1499.1" y2="1007" stroke="#101010" stroke-width="1.5"/><line x1="1563.8" y1="1003" x2="1563.8" y2="1007" stroke="#101010" stroke-width="1.5"/><line x1="1628.5" y1="1003" x2="1628.5" y2="1007" stroke="#101010" stroke-width="1.5"/><line x1="1693.2" y1="1003" x2="1693.2" y2="1007" stroke="#101010" stroke-width="1.5"/><line x1="1757.9" y1="1003" x2="1757.9" y2="1007" stroke="#101010" stroke-width="1.5"/><line x1="1822.5" y1="1003" x2="1822.5" y2="1007" stroke="#101010" stroke-width="1.5"/><line x1="1887.2" y1="1003" x2="1887.2" y2="1007" stroke="#101010" stroke-width="1.5"/><polyline points="852.34,989.05 852.99,989.51 853.63,988.64 854.28,989.07 854.93,989.82 855.57,989.35 856.22,988.20 856.87,989.71 857.51,988.19 858.16,988.15 858.81,989.38 859.45,989.17 860.10,989.39 860.75,989.44 861.40,989.53 862.04,989.92 862.69,988.99 863.34,989.14 863.98,988.93 864.63,988.63 865.28,988.72 865.92,989.35 866.57,989.23 867.22,989.98 867.86,989.14 868.51,988.71 869.16,988.32 869.80,989.70 870.45,990.06 871.10,989.42 871.74,989.57 872.39,988.83 873.04,988.62 873.68,988.88 874.33,988.33 874.98,989.34 875.62,988.06 876.27,987.69 876.92,988.53 877.57,989.79 878.21,989.35 878.86,989.46 879.51,989.51 880.15,989.53 880.80,989.77 881.45,989.52 882.09,989.71 882.74,988.11 883.39,988.41 884.03,990.17 884.68,989.39 885.33,989.59 885.97,990.64 886.62,988.95 887.27,987.84 887.91,988.60 888.56,988.53 889.21,988.59 889.85,989.43 890.50,988.00 891.15,988.97 891.79,989.37 892.44,989.57 893.09,989.37 893.74,989.21 894.38,989.20 895.03,989.11 895.68,989.30 896.32,989.47 896.97,989.57 897.62,990.04 898.26,990.01 898.91,988.95 899.56,989.23 900.20,989.10 900.85,990.32 901.50,989.90 902.14,988.98 902.79,989.92 903.44,989.32 904.08,989.05 904.73,988.76 905.38,989.30 906.02,988.47 906.67,989.38 907.32,990.28 907.96,989.58 908.61,988.16 909.26,988.64 909.91,989.14 910.55,989.11 911.20,989.66 911.85,987.87 912.49,989.66 913.14,988.92 913.79,989.52 914.43,989.44 915.08,990.01 915.73,988.33 916.37,989.31 917.02,988.50 917.67,988.09 918.31,988.83 918.96,989.25 919.61,989.70 920.25,987.68 920.90,990.11 921.55,988.88 922.19,989.96 922.84,990.26 923.49,989.98 924.13,987.71 924.78,991.84 925.43,989.10 926.08,987.82 926.72,988.97 927.37,989.39 928.02,988.83 928.66,989.25 929.31,990.00 929.96,990.09 930.60,990.17 931.25,988.07 931.90,988.55 932.54,988.46 933.19,991.07 933.84,989.22 934.48,989.25 935.13,988.25 935.78,989.36 936.42,988.44 937.07,989.11 937.72,988.78 938.36,989.03 939.01,988.43 939.66,989.16 940.30,988.43 940.95,989.49 941.60,988.97 942.25,988.58 942.89,990.07 943.54,988.87 944.19,989.15 944.83,989.97 945.48,989.40 946.13,989.43 946.77,989.21 947.42,989.43 948.07,989.48 948.71,988.99 949.36,989.97 950.01,990.17 950.65,989.78 951.30,989.02 951.95,989.38 952.59,988.89 953.24,988.99 953.89,989.54 954.53,989.96 955.18,990.96 955.83,988.69 956.47,988.70 957.12,989.58 957.77,987.64 958.42,990.21 959.06,989.46 959.71,988.03 960.36,989.82 961.00,990.00 961.65,990.29 962.30,989.37 962.94,989.31 963.59,990.47 964.24,989.82 964.88,990.22 965.53,989.79 966.18,988.68 966.82,989.36 967.47,989.16 968.12,989.51 968.76,989.48 969.41,989.43 970.06,989.01 970.70,989.67 971.35,988.82 972.00,990.70 972.64,990.17 973.29,989.29 973.94,987.82 974.59,989.42 975.23,988.56 975.88,989.49 976.53,988.29 977.17,989.16 977.82,989.66 978.47,988.38 979.11,989.08 979.76,989.36 980.41,989.17 981.05,988.74 981.70,964.55 981.70,964 982.35,960.20 982.99,958.37 983.64,956.30 984.29,953.27 984.93,951.71 985.58,949.35 986.23,947.88 986.87,946.42 987.52,945.02 988.17,943.36 988.81,941.32 989.46,941.85 990.11,939.72 990.76,939.59 991.40,939.35 992.05,937.50 992.70,936.59 993.34,935.95 993.99,937.33 994.64,935.43 995.28,934.92 995.93,934.03 996.58,933.62 997.22,933.25 997.87,933.41 998.52,933.50 999.16,932.33 999.81,932.54 1000.46,932.10 1001.10,932.07 1001.75,932.21 1002.40,931.37 1003.04,931.19 1003.69,932.44 1004.34,931.43 1004.98,930.57 1005.63,931.02 1006.28,931.07 1006.93,931.18 1007.57,931.12 1008.22,931.61 1008.87,930.32 1009.51,931.07 1010.16,930.09 1010.81,930.09 1011.45,930.50 1012.10,931.30 1012.75,930.61 1013.39,930.41 1014.04,930.09 1014.69,929.63 1015.33,929.75 1015.98,930.40 1016.63,930.68 1017.27,931.34 1017.92,930.77 1018.57,929.00 1019.21,930.48 1019.86,931.33 1020.51,930.53 1021.15,930.61 1021.80,930.38 1022.45,929.57 1023.10,930.23 1023.74,928.67 1024.39,929.54 1025.04,930.11 1025.68,929.83 1026.33,931.68 1026.98,930.19 1027.62,929.84 1028.27,930.39 1028.92,929.80 1029.56,930.71 1030.21,930.03 1030.86,930.01 1031.50,930.19 1032.15,929.77 1032.80,931.17 1033.44,929.70 1034.09,930.00 1034.74,930.70 1035.38,929.41 1036.03,930.60 1036.68,929.79 1037.32,929.95 1037.97,929.47 1038.62,929.98 1039.27,930.16 1039.91,929.56 1040.56,930.09 1041.21,930.39 1041.85,929.95 1042.50,929.54 1043.15,929.83 1043.79,930.29 1044.44,931.05 1045.09,931.40 1045.73,929.07 1046.38,930.08 1047.03,930.21 1047.67,930.03 1048.32,930.39 1048.97,930.00 1049.61,929.49 1050.26,929.68 1050.91,930.32 1051.55,930.26 1052.20,929.95 1052.85,930.23 1053.49,929.74 1054.14,929.56 1054.79,930.32 1055.44,930.07 1056.08,929.93 1056.73,930.45 1057.38,929.11 1058.02,930.84 1058.67,929.59 1059.32,930.00 1059.96,930.24 1060.61,929.51 1061.26,928.92 1061.90,930.05 1062.55,929.45 1063.20,930.07 1063.84,929.64 1064.49,929.91 1065.14,930.25 1065.78,929.92 1066.43,929.77 1067.08,929.57 1067.72,929.75 1068.37,930.42 1069.02,930.03 1069.66,929.36 1070.31,929.18 1070.96,930.02 1071.61,931.27 1072.25,930.58 1072.90,930.08 1073.55,929.97 1074.19,930.74 1074.84,930.44 1075.49,930.10 1076.13,930.29 1076.78,930.85 1077.43,930.37 1078.07,931.27 1078.72,930.04 1079.37,930.35 1080.01,930.56 1080.66,929.83 1081.31,929.36 1081.95,930.37 1082.60,929.73 1083.25,930.21 1083.89,930.17 1084.54,930.06 1085.19,930.60 1085.83,929.46 1086.48,929.85 1087.13,930.28 1087.78,930.72 1088.42,930.15 1089.07,928.75 1089.72,930.27 1090.36,930.25 1091.01,929.93 1091.66,929.42 1092.30,930.73 1092.95,930.54 1093.60,930.17 1094.24,930.17 1094.89,930.45 1095.54,929.23 1096.18,930.49 1096.83,930.18 1097.48,930.04 1098.12,929.98 1098.77,928.93 1099.42,930.67 1100.06,929.82 1100.71,931.12 1101.36,930.37 1102.00,927.87 1102.65,929.11 1103.30,931.19 1103.95,929.67 1104.59,929.47 1105.24,930.25 1105.89,930.27 1106.53,929.23 1107.18,929.65 1107.83,929.72 1108.47,930.04 1109.12,929.80 1109.77,930.00 1110.41,930.18 1111.06,929.36 1111.71,931.25 1112.35,929.98 1113.00,930.21 1113.65,929.86 1114.29,929.47 1114.94,929.46 1115.59,929.49 1116.23,929.87 1116.88,929.78 1117.53,929.56 1118.17,929.80 1118.82,930.01 1119.47,930.38 1120.12,929.61 1120.76,929.79 1121.41,929.64 1122.06,929.98 1122.70,930.23 1123.35,929.99 1124.00,930.60 1124.64,929.07 1125.29,930.24 1125.94,930.22 1126.58,930.44 1127.23,929.80 1127.88,929.95 1128.52,930.87 1129.17,929.43 1129.82,929.60 1130.46,930.21 1131.11,930.26 1131.76,928.94 1132.40,929.73 1133.05,930.17 1133.70,930.40 1134.34,929.83 1134.99,929.95 1135.64,929.32 1136.29,929.78 1136.93,929.83 1137.58,929.52 1138.23,930.41 1138.87,929.87 1139.52,929.14 1140.17,930.50 1140.81,930.26 1141.46,932.77 1142.11,929.18 1142.75,930.43 1143.40,929.97 1144.05,930.07 1144.69,930.18 1145.34,929.88 1145.99,929.72 1146.63,929.99 1147.28,930.21 1147.93,929.89 1148.57,930.32 1149.22,929.93 1149.87,930.57 1150.51,929.91 1151.16,929.17 1151.81,930.70 1152.46,930.47 1153.10,930.74 1153.75,930.53 1154.40,929.23 1155.04,929.51 1155.69,930.36 1156.34,930.01 1156.98,930.80 1157.63,929.22 1158.28,929.68 1158.92,930.50 1159.57,930.46 1160.22,929.82 1160.86,930.49 1161.51,929.71 1162.16,930.14 1162.80,929.63 1163.45,930.02 1164.10,929.70 1164.74,930.08 1165.39,930.37 1166.04,930.38 1166.68,929.86 1167.33,929.99 1167.98,929.91 1168.63,929.14 1169.27,929.51 1169.92,929.99 1170.57,931.04 1171.21,928.70 1171.86,930.49 1172.51,931.33 1173.15,930.26 1173.80,929.85 1174.45,930.43 1175.09,930.19 1175.74,930.38 1176.39,933.10 1177.03,935.21 1177.68,939.50 1178.33,941.76 1178.97,944.86 1179.62,948.04 1180.27,950.76 1180.91,952.19 1181.56,954.58 1182.21,955.14 1182.85,956.81 1183.50,957.77 1184.15,959.78 1184.80,961.38 1185.44,962.69 1186.09,965.15 1186.74,965.48 1187.38,966.26 1188.03,967.76 1188.68,968.78 1189.32,969.06 1189.97,969.55 1190.62,968.31 1191.26,972.32 1191.91,973.18 1192.56,973.41 1193.20,973.56 1193.85,974.37 1194.50,974.86 1195.14,975.08 1195.79,976.15 1196.44,976.49 1197.08,977.47 1197.73,977.46 1198.38,977.23 1199.02,976.96 1199.67,977.14 1200.32,978.36 1200.97,978.74 1201.61,978.40 1202.26,979.86 1202.91,979.35 1203.55,979.17 1204.20,979.23 1204.85,979.90 1205.49,980.22 1206.14,980.29 1206.79,980.80 1207.43,981.01 1208.08,980.16 1208.73,980.13 1209.37,981.06 1210.02,981.42 1210.67,981.35 1211.31,981.41 1211.96,980.62 1212.61,981.89 1213.25,982.12 1213.90,982.13 1214.55,981.95 1215.19,981.11 1215.84,982.04 1216.49,982.95 1217.14,981.80 1217.78,982.26 1218.43,981.45 1219.08,983.67 1219.72,982.46 1220.37,981.13 1221.02,983.02 1221.66,982.32 1222.31,982.11 1222.96,982.11 1223.60,981.71 1224.25,983.10 1224.90,982.03 1225.54,983.34 1226.19,983.21 1226.84,983.86 1227.48,983.17 1228.13,983.24 1228.78,980.68 1229.42,983.47 1230.07,982.61 1230.72,982.58 1231.36,982.82 1232.01,983.03 1232.66,983.54 1233.31,983.25 1233.95,983.69 1234.60,983.36 1235.25,984.62 1235.89,983.76 1236.54,983.92 1237.19,982.81 1237.83,984.42 1238.48,984.20 1239.13,983.54 1239.77,983.73 1240.42,983.57 1241.07,983.16 1241.71,982.58 1242.36,983.74 1243.01,983.25 1243.65,984.15 1244.30,983.63 1244.95,983.15 1245.59,984.82 1246.24,983.02 1246.89,984.01 1247.53,982.30 1248.18,984.09 1248.83,983.63 1249.48,984.25 1250.12,983.63 1250.77,984.27 1251.42,984.99 1252.06,983.94 1252.71,983.94 1253.36,984.34 1254.00,983.34 1254.65,983.19 1255.30,984.98 1255.94,984.63 1256.59,984.31 1257.24,983.68 1257.88,984.28 1258.53,983.58 1259.18,984.50 1259.82,984.00 1260.47,983.92 1261.12,984.86 1261.76,983.66 1262.41,983.45 1263.06,984.82 1263.70,983.24 1264.35,984.76 1265.00,984.19 1265.65,985.39 1266.29,984.77 1266.94,984.91 1267.59,984.84 1268.23,985.03 1268.88,984.55 1269.53,984.33 1270.17,983.34 1270.82,985.79 1271.47,984.29 1272.11,984.83 1272.76,984.85 1273.41,985.28 1274.05,984.96 1274.70,983.85 1275.35,984.43 1275.99,984.85 1276.64,984.72 1277.29,983.50 1277.93,984.82 1278.58,984.21 1279.23,985.61 1279.87,984.16 1280.52,984.52 1281.17,984.12 1281.82,984.73 1282.46,984.74 1283.11,984.75 1283.76,984.14 1284.40,984.17 1285.05,985.22 1285.70,985.35 1286.34,984.86 1286.99,984.50 1287.64,985.50 1288.28,984.72 1288.93,984.99 1289.58,984.82 1290.22,985.08 1290.87,984.98 1291.52,984.44 1292.16,984.54 1292.81,985.08 1293.46,984.94 1294.10,984.65 1294.75,985.77 1295.40,985.17 1296.04,985.16 1296.69,985.31 1297.34,985.09 1297.99,984.75 1298.63,985.22 1299.28,983.89 1299.93,985.51 1300.57,984.77 1301.22,985.53 1301.87,984.28 1302.51,984.98 1303.16,985.22 1303.81,984.69 1304.45,984.56 1305.10,985.22 1305.75,986.16 1306.39,984.73 1307.04,986.39 1307.69,985.46 1308.33,987.23 1308.98,985.41 1309.63,985.95 1310.27,984.76 1310.92,985.91 1311.57,986.61 1312.21,985.05 1312.86,986.45 1313.51,985.00 1314.16,987.79 1314.80,985.53 1315.45,985.62 1316.10,985.91 1316.74,985.74 1317.39,985.11 1318.04,985.76 1318.68,985.33 1319.33,985.87 1319.98,984.83 1320.62,985.93 1321.27,985.39 1321.92,985.71 1322.56,985.11 1323.21,985.72 1323.86,986.21 1324.50,986.41 1325.15,986.04 1325.80,985.06 1326.44,987.53 1327.09,985.07 1327.74,985.99 1328.38,985.41 1329.03,986.30 1329.68,985.86 1330.33,985.23 1330.97,986.38 1331.62,985.68 1332.27,984.64 1332.91,986.05 1333.56,985.55 1334.21,985.56 1334.85,985.23 1335.50,986.08 1336.15,985.40 1336.79,986.23 1337.44,985.69 1338.09,987.09 1338.73,985.92 1339.38,986.73 1340.03,986.17 1340.67,985.52 1341.32,985.32 1341.97,985.62 1342.61,985.86 1343.26,984.85 1343.91,986.07 1344.55,986.17 1345.20,985.43 1345.85,985.57 1346.50,985.50 1347.14,985.60 1347.79,985.40 1348.44,985.64 1349.08,985.18 1349.73,986.44 1350.38,987.19 1351.02,986.43 1351.67,985.45 1352.32,987.03 1352.96,986.20 1353.61,986.74 1354.26,985.46 1354.90,986.61 1355.55,986.10 1356.20,986.20 1356.84,985.08 1357.49,985.11 1358.14,985.11 1358.78,985.53 1359.43,986.07 1360.08,986.46 1360.72,987.31 1361.37,986.42 1362.02,986.59 1362.67,986.30 1363.31,987.31 1363.96,986.47 1364.61,986.45 1365.25,986.56 1365.90,986.99 1366.55,985.63 1367.19,986.24 1367.84,985.77 1368.49,984.93 1369.13,986.22 1369.78,986.54 1370.43,986.22 1371.07,987.05 1371.72,987.49 1372.37,985.94 1373.01,987.06 1373.66,987.14 1374.31,987.34 1374.95,986.07 1375.60,986.05 1376.25,987.50 1376.89,986.17 1377.54,988.03 1378.19,987.14 1378.84,986.14 1379.48,987.26 1380.13,986.14 1380.78,986.26 1381.42,985.92 1382.07,987.22 1382.72,985.58 1383.36,986.14 1384.01,985.66 1384.66,986.04 1385.30,987.16 1385.95,985.67 1386.60,986.45 1387.24,987.79 1387.89,987.12 1388.54,986.36 1389.18,986.77 1389.83,986.28 1390.48,986.75 1391.12,987.49 1391.77,986.81 1392.42,987.13 1393.06,986.45 1393.71,986.77 1394.36,986.79 1395.01,987.50 1395.65,986.04 1396.30,986.63 1396.95,986.87 1397.59,987.09 1398.24,986.19 1398.89,986.51 1399.53,988.73 1400.18,987.33 1400.83,986.06 1401.47,986.00 1402.12,984.04 1402.77,987.39 1403.41,987.26 1404.06,986.29 1404.71,986.92 1405.35,986.19 1406.00,987.47 1406.65,985.42 1407.29,986.95 1407.94,987.20 1408.59,985.71 1409.23,986.42 1409.88,987.04 1410.53,986.74 1411.18,987.97 1411.82,987.91 1412.47,985.92 1413.12,985.72 1413.76,986.55 1414.41,987.01 1415.06,986.93 1415.70,987.07 1416.35,987.98 1417.00,986.17 1417.64,987.13 1418.29,986.01 1418.94,987.25 1419.58,987.05 1420.23,986.72 1420.88,986.49 1421.52,987.37 1422.17,987.28 1422.82,986.60 1423.46,987.01 1424.11,986.93 1424.76,986.89 1425.40,988.32 1426.05,987.30 1426.70,987.84 1427.35,986.07 1427.99,988.14 1428.64,987.80 1429.29,986.49 1429.93,987.18 1430.58,986.79 1431.23,986.79 1431.87,986.86 1432.52,986.30 1433.17,986.98 1433.81,987.66 1434.46,987.34 1435.11,986.60 1435.75,986.52 1436.40,988.25 1437.05,988.26 1437.69,987.52 1438.34,986.59 1438.99,987.15 1439.63,985.88 1440.28,988.48 1440.93,987.50 1441.57,987.39 1442.22,987.03 1442.87,988.15 1443.52,988.60 1444.16,987.40 1444.81,987.38 1445.46,987.72 1446.10,986.84 1446.75,987.00 1447.40,987.05 1448.04,986.76 1448.69,986.61 1449.34,986.71 1449.98,986.44 1450.63,986.55 1451.28,987.23 1451.92,987.38 1452.57,987.14 1453.22,986.98 1453.86,987.84 1454.51,988.23 1455.16,985.99 1455.80,987.37 1456.45,987.48 1457.10,986.70 1457.74,987.16 1458.39,987.18 1459.04,986.91 1459.69,987.19 1460.33,987.57 1460.98,986.83 1461.63,987.23 1462.27,987.02 1462.92,986.52 1463.57,987.27 1464.21,988.80 1464.86,987.45 1465.51,987.62 1466.15,987.53 1466.80,988.03 1467.45,988.29 1468.09,986.62 1468.74,986.94 1469.39,987.93 1470.03,986.58 1470.68,986.58 1471.33,987.32 1471.97,987.02 1472.62,987.48 1473.27,987.77 1473.91,987.93 1474.56,987.95 1475.21,986.05 1475.86,987.70 1476.50,986.70 1477.15,987.41 1477.80,986.78 1478.44,985.77 1479.09,988.00 1479.74,987.79 1480.38,986.27 1481.03,988.69 1481.68,986.98 1482.32,986.96 1482.97,986.93 1483.62,984.90 1484.26,987.65 1484.91,987.59 1485.56,985.97 1486.20,988.30 1486.85,986.54 1487.50,987.28 1488.14,988.27 1488.79,988.12 1489.44,987.00 1490.08,986.04 1490.73,987.98 1491.38,987.21 1492.03,987.15 1492.67,986.92 1493.32,987.36 1493.97,987.59 1494.61,987.65 1495.26,987.00 1495.91,987.69 1496.55,986.31 1497.20,987.09 1497.85,987.18 1498.49,987.10 1499.14,986.64 1499.79,987.18 1500.43,987.45 1501.08,987.86 1501.73,987.36 1502.37,987.39 1503.02,987.50 1503.67,988.21 1504.31,987.95 1504.96,987.41 1505.61,988.56 1506.25,987.95 1506.90,986.97 1507.55,987.88 1508.20,987.70 1508.84,988.97 1509.49,987.18 1510.14,987.95 1510.78,988.13 1511.43,986.58 1512.08,987.44 1512.72,986.47 1513.37,987.14 1514.02,986.20 1514.66,988.51 1515.31,987.52 1515.96,988.26 1516.60,987.32 1517.25,988.07 1517.90,986.91 1518.54,986.58 1519.19,987.76 1519.84,986.95 1520.48,987.31 1521.13,987.93 1521.78,986.95 1522.42,987.41 1523.07,987.84 1523.72,988.67 1524.37,988.24 1525.01,988.33 1525.66,986.24 1526.31,987.61 1526.95,987.49 1527.60,986.19 1528.25,987.56 1528.89,988.27 1529.54,987.54 1530.19,987.11 1530.83,987.91 1531.48,988.41 1532.13,987.26 1532.77,987.13 1533.42,987.99 1534.07,988.69 1534.71,986.50 1535.36,986.15 1536.01,986.16 1536.65,987.72 1537.30,987.24 1537.95,987.91 1538.59,986.94 1539.24,987.17 1539.89,986.55 1540.54,987.28 1541.18,987.75 1541.83,987.20 1542.48,987.58 1543.12,987.14 1543.77,987.26 1544.42,988.19 1545.06,987.76 1545.71,987.58 1546.36,987.55 1547.00,986.84 1547.65,987.15 1548.30,987.16 1548.94,987.45 1549.59,988.40 1550.24,987.60 1550.88,988.17 1551.53,988.46 1552.18,987.97 1552.82,988.26 1553.47,989.05 1554.12,987.42 1554.76,987.51 1555.41,987.08 1556.06,988.68 1556.71,988.39 1557.35,987.07 1558.00,987.82 1558.65,986.32 1559.29,986.88 1559.94,987.64 1560.59,987.82 1561.23,987.14 1561.88,988.83 1562.53,986.43 1563.17,986.74 1563.82,987.68 1564.47,988.25 1565.11,987.21 1565.76,988.80 1566.41,987.67 1567.05,988.03 1567.70,988.15 1568.35,987.58 1568.99,987.09 1569.64,987.54 1570.29,988.47 1570.93,988.45 1571.58,987.85 1572.23,988.13 1572.88,987.39 1573.52,987.21 1574.17,988.08 1574.82,987.94 1575.46,986.61 1576.11,988.08 1576.76,987.11 1577.40,988.45 1578.05,988.07 1578.70,989.11 1579.34,987.39 1579.99,987.79 1580.64,988.34 1581.28,987.22 1581.93,987.37 1582.58,987.44 1583.22,986.95 1583.87,987.64 1584.52,987.04 1585.16,988.29 1585.81,987.51 1586.46,987.87 1587.10,987.33 1587.75,988.51 1588.40,987.26 1589.05,988.25 1589.69,987.55 1590.34,988.11 1590.99,987.59 1591.63,988.32 1592.28,988.60 1592.93,986.92 1593.57,988.61 1594.22,987.89 1594.87,986.98 1595.51,988.19 1596.16,988.05 1596.81,987.27 1597.45,988.72 1598.10,988.61 1598.75,987.90 1599.39,987.78 1600.04,987.54 1600.69,988.29 1601.33,987.50 1601.98,987.45 1602.63,987.65 1603.27,987.29 1603.92,987.73 1604.57,987.77 1605.22,987.71 1605.86,987.92 1606.51,988.18 1607.16,987.88 1607.80,988.08 1608.45,989.04 1609.10,987.55 1609.74,987.19 1610.39,987.71 1611.04,988.01 1611.68,988.59 1612.33,987.37 1612.98,987.30 1613.62,987.29 1614.27,987.12 1614.92,988.08 1615.56,987.78 1616.21,987.59 1616.86,987.72 1617.50,988.52 1618.15,987.33 1618.80,987.65 1619.44,987.43 1620.09,987.99 1620.74,987.54 1621.39,986.92 1622.03,987.13 1622.68,987.72 1623.33,987.40 1623.97,988.97 1624.62,987.23 1625.27,988.74 1625.91,988.22 1626.56,988.56 1627.21,987.90 1627.85,986.66 1628.50,987.53 1629.15,988.10 1629.79,988.10 1630.44,988.67 1631.09,987.49 1631.73,988.40 1632.38,987.87 1633.03,987.83 1633.67,988.62 1634.32,988.28 1634.97,988.34 1635.61,988.24 1636.26,987.73 1636.91,987.78 1637.56,986.83 1638.20,986.79 1638.85,989.19 1639.50,988.13 1640.14,987.70 1640.79,988.18 1641.44,988.14 1642.08,987.65 1642.73,987.78 1643.38,987.28 1644.02,987.57 1644.67,988.33 1645.32,988.03 1645.96,987.43 1646.61,987.05 1647.26,987.02 1647.90,988.48 1648.55,987.58 1649.20,987.58 1649.84,988.57 1650.49,988.16 1651.14,988.38 1651.78,988.45 1652.43,987.98 1653.08,988.98 1653.73,987.85 1654.37,987.39 1655.02,988.05 1655.67,987.35 1656.31,988.09 1656.96,988.43 1657.61,986.68 1658.25,987.11 1658.90,988.10 1659.55,988.29 1660.19,988.10 1660.84,988.84 1661.49,987.18 1662.13,987.04 1662.78,987.09 1663.43,987.45 1664.07,987.52 1664.72,986.98 1665.37,987.95 1666.01,987.95 1666.66,987.75 1667.31,987.60 1667.95,987.93 1668.60,987.30 1669.25,987.54 1669.90,987.61 1670.54,988.03 1671.19,987.57 1671.84,987.76 1672.48,988.46 1673.13,988.27 1673.78,987.45 1674.42,987.71 1675.07,987.06 1675.72,987.79 1676.36,988.43 1677.01,988.14 1677.66,987.63 1678.30,986.87 1678.95,987.81 1679.60,987.58 1680.24,988.58 1680.89,989.20 1681.54,988.54 1682.18,988.65 1682.83,987.79 1683.48,987.94 1684.12,987.57 1684.77,988.76 1685.42,986.98 1686.07,987.03 1686.71,988.12 1687.36,987.60 1688.01,987.94 1688.65,986.96 1689.30,987.18 1689.95,988.57 1690.59,988.66 1691.24,988.09 1691.89,987.97 1692.53,987.59 1693.18,987.86 1693.83,988.27 1694.47,985.67 1695.12,987.73 1695.77,988.18 1696.41,988.58 1697.06,987.63 1697.71,988.10 1698.35,987.47 1699.00,986.08 1699.65,988.29 1700.29,988.45 1700.94,988.25 1701.59,987.96 1702.24,987.35 1702.88,988.31 1703.53,986.93 1704.18,988.64 1704.82,987.68 1705.47,988.25 1706.12,988.24 1706.76,987.98 1707.41,987.36 1708.06,988.00 1708.70,987.82 1709.35,987.99 1710.00,988.21 1710.64,987.98 1711.29,987.79 1711.94,988.59 1712.58,986.41 1713.23,987.63 1713.88,986.93 1714.52,987.51 1715.17,987.32 1715.82,987.26 1716.46,988.24 1717.11,986.72 1717.76,987.55 1718.41,988.86 1719.05,987.53 1719.70,987.48 1720.35,988.40 1720.99,988.10 1721.64,987.33 1722.29,987.96 1722.93,989.56 1723.58,988.16 1724.23,987.17 1724.87,988.16 1725.52,988.36 1726.17,988.11 1726.81,986.56 1727.46,987.45 1728.11,987.69 1728.75,987.78 1729.40,988.47 1730.05,987.86 1730.69,988.06 1731.34,987.74 1731.99,986.15 1732.63,988.36 1733.28,987.79 1733.93,987.50 1734.58,986.95 1735.22,987.19 1735.87,987.75 1736.52,986.37 1737.16,988.36 1737.81,986.77 1738.46,988.19 1739.10,988.60 1739.75,988.28 1740.40,987.72 1741.04,987.55 1741.69,987.42 1742.34,988.49 1742.98,988.13 1743.63,987.56 1744.28,988.52 1744.92,987.82 1745.57,987.94 1746.22,988.12 1746.86,987.90 1747.51,987.79 1748.16,988.15 1748.80,987.94 1749.45,987.66 1750.10,987.14 1750.75,987.73 1751.39,987.49 1752.04,987.60 1752.69,987.67 1753.33,986.93 1753.98,988.15 1754.63,986.29 1755.27,986.51 1755.92,987.59 1756.57,987.34 1757.21,987.06 1757.86,988.06 1758.51,987.09 1759.15,988.58 1759.80,988.18 1760.45,988.46 1761.09,987.71 1761.74,987.82 1762.39,987.97 1763.03,988.00 1763.68,989.63 1764.33,987.32 1764.97,988.82 1765.62,988.16 1766.27,987.76 1766.92,987.56 1767.56,987.45 1768.21,987.36 1768.86,987.69 1769.50,987.63 1770.15,987.62 1770.80,987.53 1771.44,988.11 1772.09,987.61 1772.74,987.54 1773.38,987.61 1774.03,987.78 1774.68,987.82 1775.32,988.93 1775.97,987.59 1776.62,988.54 1777.26,987.60 1777.91,987.19 1778.56,988.24 1779.20,987.66 1779.85,988.16 1780.50,986.76 1781.14,986.50 1781.79,987.92 1782.44,989.26 1783.09,988.01 1783.73,988.23 1784.38,988.15 1785.03,987.22 1785.67,989.07 1786.32,988.09 1786.97,987.92 1787.61,987.88 1788.26,987.78 1788.91,990.14 1789.55,988.06 1790.20,988.16 1790.85,987.73 1791.49,987.60 1792.14,988.10 1792.79,987.89 1793.43,987.24 1794.08,986.60 1794.73,987.97 1795.37,989.16 1796.02,987.69 1796.67,988.15 1797.31,988.36 1797.96,987.33 1798.61,987.91 1799.26,988.86 1799.90,988.00 1800.55,987.07 1801.20,987.67 1801.84,987.82 1802.49,987.35 1803.14,988.53 1803.78,987.85 1804.43,989.82 1805.08,989.63 1805.72,987.92 1806.37,988.77 1807.02,988.04 1807.66,988.23 1808.31,988.11 1808.96,987.84 1809.60,987.49 1810.25,987.35 1810.90,988.94 1811.54,987.95 1812.19,986.32 1812.84,986.88 1813.48,987.92 1814.13,987.36 1814.78,987.13 1815.43,987.81 1816.07,987.43 1816.72,987.41 1817.37,987.83 1818.01,989.26 1818.66,987.28 1819.31,987.86 1819.95,988.61 1820.60,987.63 1821.25,988.12 1821.89,987.54 1822.54,987.12 1823.19,988.16 1823.83,988.07 1824.48,987.82 1825.13,988.08 1825.77,987.67 1826.42,988.40 1827.07,988.29 1827.71,987.71 1828.36,988.03 1829.01,987.73 1829.65,987.34 1830.30,987.97 1830.95,987.61 1831.60,987.52 1832.24,987.90 1832.89,987.87 1833.54,988.03 1834.18,988.31 1834.83,988.09 1835.48,987.76 1836.12,988.36 1836.77,987.18 1837.42,987.06 1838.06,988.18 1838.71,987.16 1839.36,987.42 1840.00,988.16 1840.65,987.23 1841.30,988.43 1841.94,987.37 1842.59,988.48 1843.24,988.89 1843.88,987.79 1844.53,987.85 1845.18,988.16 1845.82,987.27 1846.47,987.85 1847.12,988.75 1847.77,988.09 1848.41,988.29 1849.06,987.44 1849.71,987.31 1850.35,988.22 1851.00,987.49 1851.65,987.10 1852.29,987.64 1852.94,987.27 1853.59,988.28 1854.23,988.25 1854.88,988.17 1855.53,988.12 1856.17,988.82 1856.82,988.27 1857.47,988.83 1858.11,988.27 1858.76,989.07 1859.41,987.95 1860.05,990.04 1860.70,988.59 1861.35,987.92 1861.99,988.48 1862.64,987.29 1863.29,987.72 1863.94,987.56 1864.58,989.10 1865.23,987.95 1865.88,988.37 1866.52,987.50 1867.17,988.44 1867.82,987.25 1868.46,988.77 1869.11,987.78 1869.76,987.90 1870.40,987.32 1871.05,988.39 1871.70,988.11 1872.34,987.49 1872.99,987.41 1873.64,987.61 1874.28,988.12 1874.93,987.83 1875.58,989.11 1876.22,988.33 1876.87,988.55 1877.52,989.20 1878.16,987.07 1878.81,987.98 1879.46,988.25 1880.11,989.08 1880.75,988.04 1881.40,988.24 1882.05,988.56 1882.69,987.78 1883.34,988.73 1883.99,987.46 1884.63,987.91 1885.28,987.81 1885.93,988.06 1886.57,988.76 1887.22,988.72" fill="none" stroke="#e80000" stroke-width="1.8" stroke-linejoin="round"/><line x1="852" y1="841.5" x2="1887.2" y2="841.5" stroke="#ece8c0" stroke-width="2.2" stroke-dasharray="4 3.5" stroke-dashoffset="4"/><line x1="852" y1="841.5" x2="1887.2" y2="841.5" stroke="#2a2a1e" stroke-width="2.2" stroke-dasharray="3.5 4"/><line x1="852" y1="988" x2="1887.2" y2="988" stroke="#ece8c0" stroke-width="2.2" stroke-dasharray="4 3.5" stroke-dashoffset="4"/><line x1="852" y1="988" x2="1887.2" y2="988" stroke="#2a2a1e" stroke-width="2.2" stroke-dasharray="3.5 4"/></svg>
<div class="t" style="left:840.00px;top:1018.96px;font-size:16px;color:#101010;transform:scaleX(0.9737);">200</div>
<div class="t" style="left:899.02px;top:1018.96px;font-size:16px;color:#101010;transform:scaleX(1.0302);">-100</div>
<div class="t" style="left:975.20px;top:1018.96px;font-size:16px;color:#101010;transform:scaleX(1.1228);">0</div>
<div class="t" style="left:1031.88px;top:1018.96px;font-size:16px;color:#101010;transform:scaleX(0.9737);">100</div>
<div class="t" style="left:1096.56px;top:1018.96px;font-size:16px;color:#101010;transform:scaleX(0.9737);">200</div>
<div class="t" style="left:1161.24px;top:1018.96px;font-size:16px;color:#101010;transform:scaleX(0.9737);">300</div>
<div class="t" style="left:1225.92px;top:1018.96px;font-size:16px;color:#101010;transform:scaleX(0.9737);">400</div>
<div class="t" style="left:1290.60px;top:1018.96px;font-size:16px;color:#101010;transform:scaleX(0.9737);">500</div>
<div class="t" style="left:1355.28px;top:1018.96px;font-size:16px;color:#101010;transform:scaleX(0.9737);">600</div>
<div class="t" style="left:1419.96px;top:1018.96px;font-size:16px;color:#101010;transform:scaleX(0.9737);">700</div>
<div class="t" style="left:1484.64px;top:1018.96px;font-size:16px;color:#101010;transform:scaleX(0.9737);">800</div>
<div class="t" style="left:1549.32px;top:1018.96px;font-size:16px;color:#101010;transform:scaleX(0.9737);">900</div>
<div class="t" style="left:1610.00px;top:1018.96px;font-size:16px;color:#101010;transform:scaleX(0.9552);">1000</div>
<div class="t" style="left:1674.68px;top:1018.96px;font-size:16px;color:#101010;transform:scaleX(0.9882);">1100</div>
<div class="t" style="left:1739.36px;top:1018.96px;font-size:16px;color:#101010;transform:scaleX(0.9552);">1200</div>
<div class="t" style="left:1804.04px;top:1018.96px;font-size:16px;color:#101010;transform:scaleX(0.9552);">1300</div>
<div class="t" style="left:1868.72px;top:1018.96px;font-size:16px;color:#101010;transform:scaleX(0.9552);">1400</div>
</body></html>
